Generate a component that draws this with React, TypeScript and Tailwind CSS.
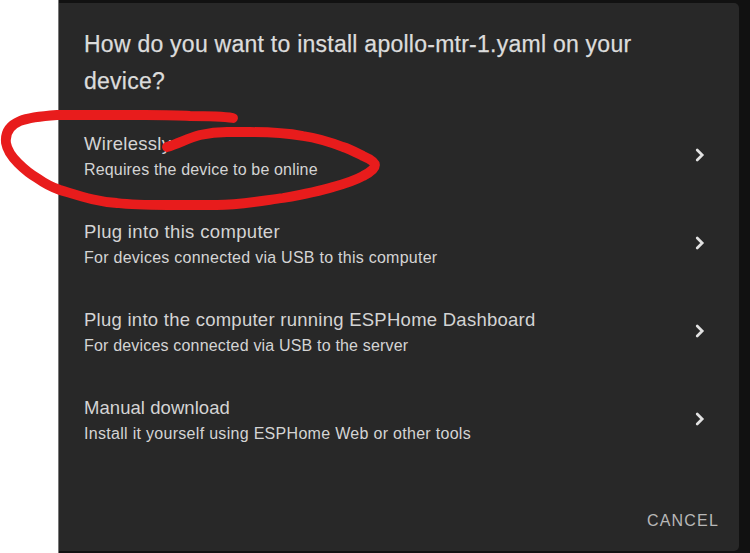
const options = [
  { title: "Wirelessly", detail: "Requires the device to be online", titleSpacing: "tracking-[0.3px]", detailSpacing: "tracking-[0.16px]" },
  { title: "Plug into this computer", detail: "For devices connected via USB to this computer", titleSpacing: "tracking-[0.34px]", detailSpacing: "tracking-[0.26px]" },
  { title: "Plug into the computer running ESPHome Dashboard", detail: "For devices connected via USB to the server", titleSpacing: "tracking-[0.26px]", detailSpacing: "tracking-[0.18px]" },
  { title: "Manual download", detail: "Install it yourself using ESPHome Web or other tools", titleSpacing: "tracking-[0.06px]", detailSpacing: "tracking-[0.3px]" },
];

function Chevron() {
  return (
    <svg className="h-4 w-3 shrink-0" viewBox="0 0 12 16" fill="none" stroke="#e2e2e2" strokeWidth="2.7" strokeLinecap="round">
      <path d="M2.2 3 7.2 8 2.2 13" />
    </svg>
  );
}

export default function App() {
  return (
    <div className="relative h-[553px] w-[750px] overflow-hidden bg-white pl-[58px] font-['Liberation_Sans',Arial,sans-serif]">
      <div className="h-full border-l border-[#777777] bg-[#111111] pt-[3px] pr-[11px] pb-[2px]">
        <main className="flex h-full flex-col rounded-r-[5px] bg-[#282828] pl-[25px]">
          <h1 className="pt-[23px] text-[23px] leading-[37px] tracking-[0.25px] whitespace-nowrap text-[#dcdcdc] [-webkit-text-stroke:0.25px_#dcdcdc]">
            How do you want to install apollo-mtr-1.yaml on your
            <br />
            device?
          </h1>
          <ul className="pt-[11px]">
            {options.map((option) => (
              <li key={option.title} className="flex h-[88px] items-center justify-between pr-[32px]">
                <div className="pt-[2px] whitespace-nowrap">
                  <div className={`text-[18.5px] leading-[26px] text-[#d4d4d4] ${option.titleSpacing}`}>{option.title}</div>
                  <div className={`mt-px text-[16px] leading-[24px] text-[#d4d4d4] ${option.detailSpacing}`}>{option.detail}</div>
                </div>
                <Chevron />
              </li>
            ))}
          </ul>
          <button className="mt-auto mr-[20px] mb-[18px] self-end text-[16px] leading-[24px] tracking-[1.2px] text-[#b8b8b8]">
            CANCEL
          </button>
        </main>
      </div>
      <svg className="pointer-events-none absolute inset-0 h-full w-full" viewBox="0 0 750 553" fill="none" stroke="#e81c1c" strokeWidth="9.8" strokeLinecap="round" strokeLinejoin="round">
        <path d="M233 118C220 116 207 116 190 116C177 115 160 115 145 115H57C43 116 30 117 20 121C8 126 5 134 6 143C7 149 11 156 18 163C23 168 30 174 37 178C44 183 51 187 60 190C80 196 97 202 117 203C134 205 150 205 167 205H217C239 205 261 201 283 198C300 195 317 192 333 187C344 184 354 181 363 176C371 172 375 168 375 165C375 162 370 159 363 156C357 153 350 149 343 147C330 142 317 138 303 136C286 133 268 132 250 132H227C218 132 209 133 200 135C188 138 178 144 167 147" />
      </svg>
    </div>
  );
}
